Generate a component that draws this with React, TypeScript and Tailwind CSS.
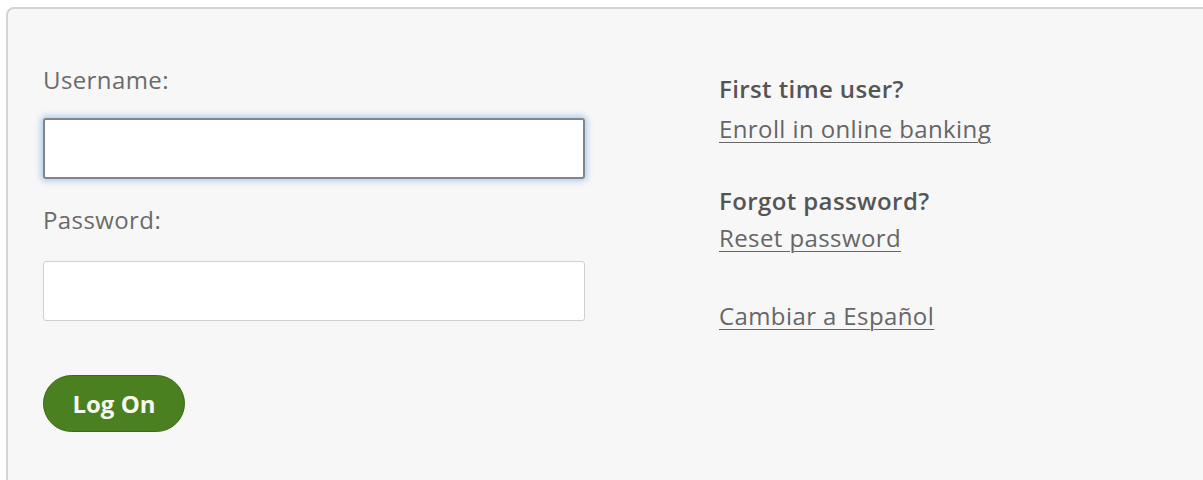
export default function App() {
  return (
    <div className="h-[480px] w-[1203px] overflow-hidden bg-white pl-[6px] pt-[7px] font-['Open_Sans',sans-serif]">
      <div className="flex h-full rounded-tl-[8px] border-l-2 border-t-2 border-[#d4d4d4] bg-[#f7f7f7] pl-[35px] pt-[55px]">
        {/* sign-in form */}
        <div className="w-[542px]">
          <label className="block text-[24px] leading-[32px] tracking-[0.4px] text-[#6b6b6b]">Username:</label>
          <input
            type="text"
            className="mt-[22px] block h-[61px] w-[542px] rounded-[3px] border-2 border-[#80868c] bg-white shadow-[0_0_6px_2px_rgba(110,165,225,0.55)] outline-none"
          />
          <label className="mt-[25px] block text-[24px] leading-[32px] tracking-[0.4px] text-[#6b6b6b]">Password:</label>
          <input
            type="password"
            className="mt-[25px] block h-[60px] w-[542px] rounded-[3px] border border-[#cfcfcf] bg-white outline-none"
          />
          <button className="mt-[54px] h-[57px] w-[142px] rounded-full border border-[#3c6b18] bg-[#4a8020] text-[24px] font-bold text-[#f4f8ef]">
            Log On
          </button>
        </div>

        {/* help links */}
        <div className="ml-[134px] pt-[6px] text-[24px] leading-[37px] tracking-[0.4px] text-[#666]">
          <p className="font-semibold text-[#555]">First time user?</p>
          <a href="#" className="mt-[3px] block underline decoration-1 underline-offset-4">Enroll in online banking</a>
          <p className="mt-[35px] font-semibold text-[#555]">Forgot password?</p>
          <a href="#" className="block underline decoration-1 underline-offset-4">Reset password</a>
          <a href="#" className="mt-[41px] block underline decoration-1 underline-offset-4">Cambiar a Español</a>
        </div>
      </div>
    </div>
  );
}
